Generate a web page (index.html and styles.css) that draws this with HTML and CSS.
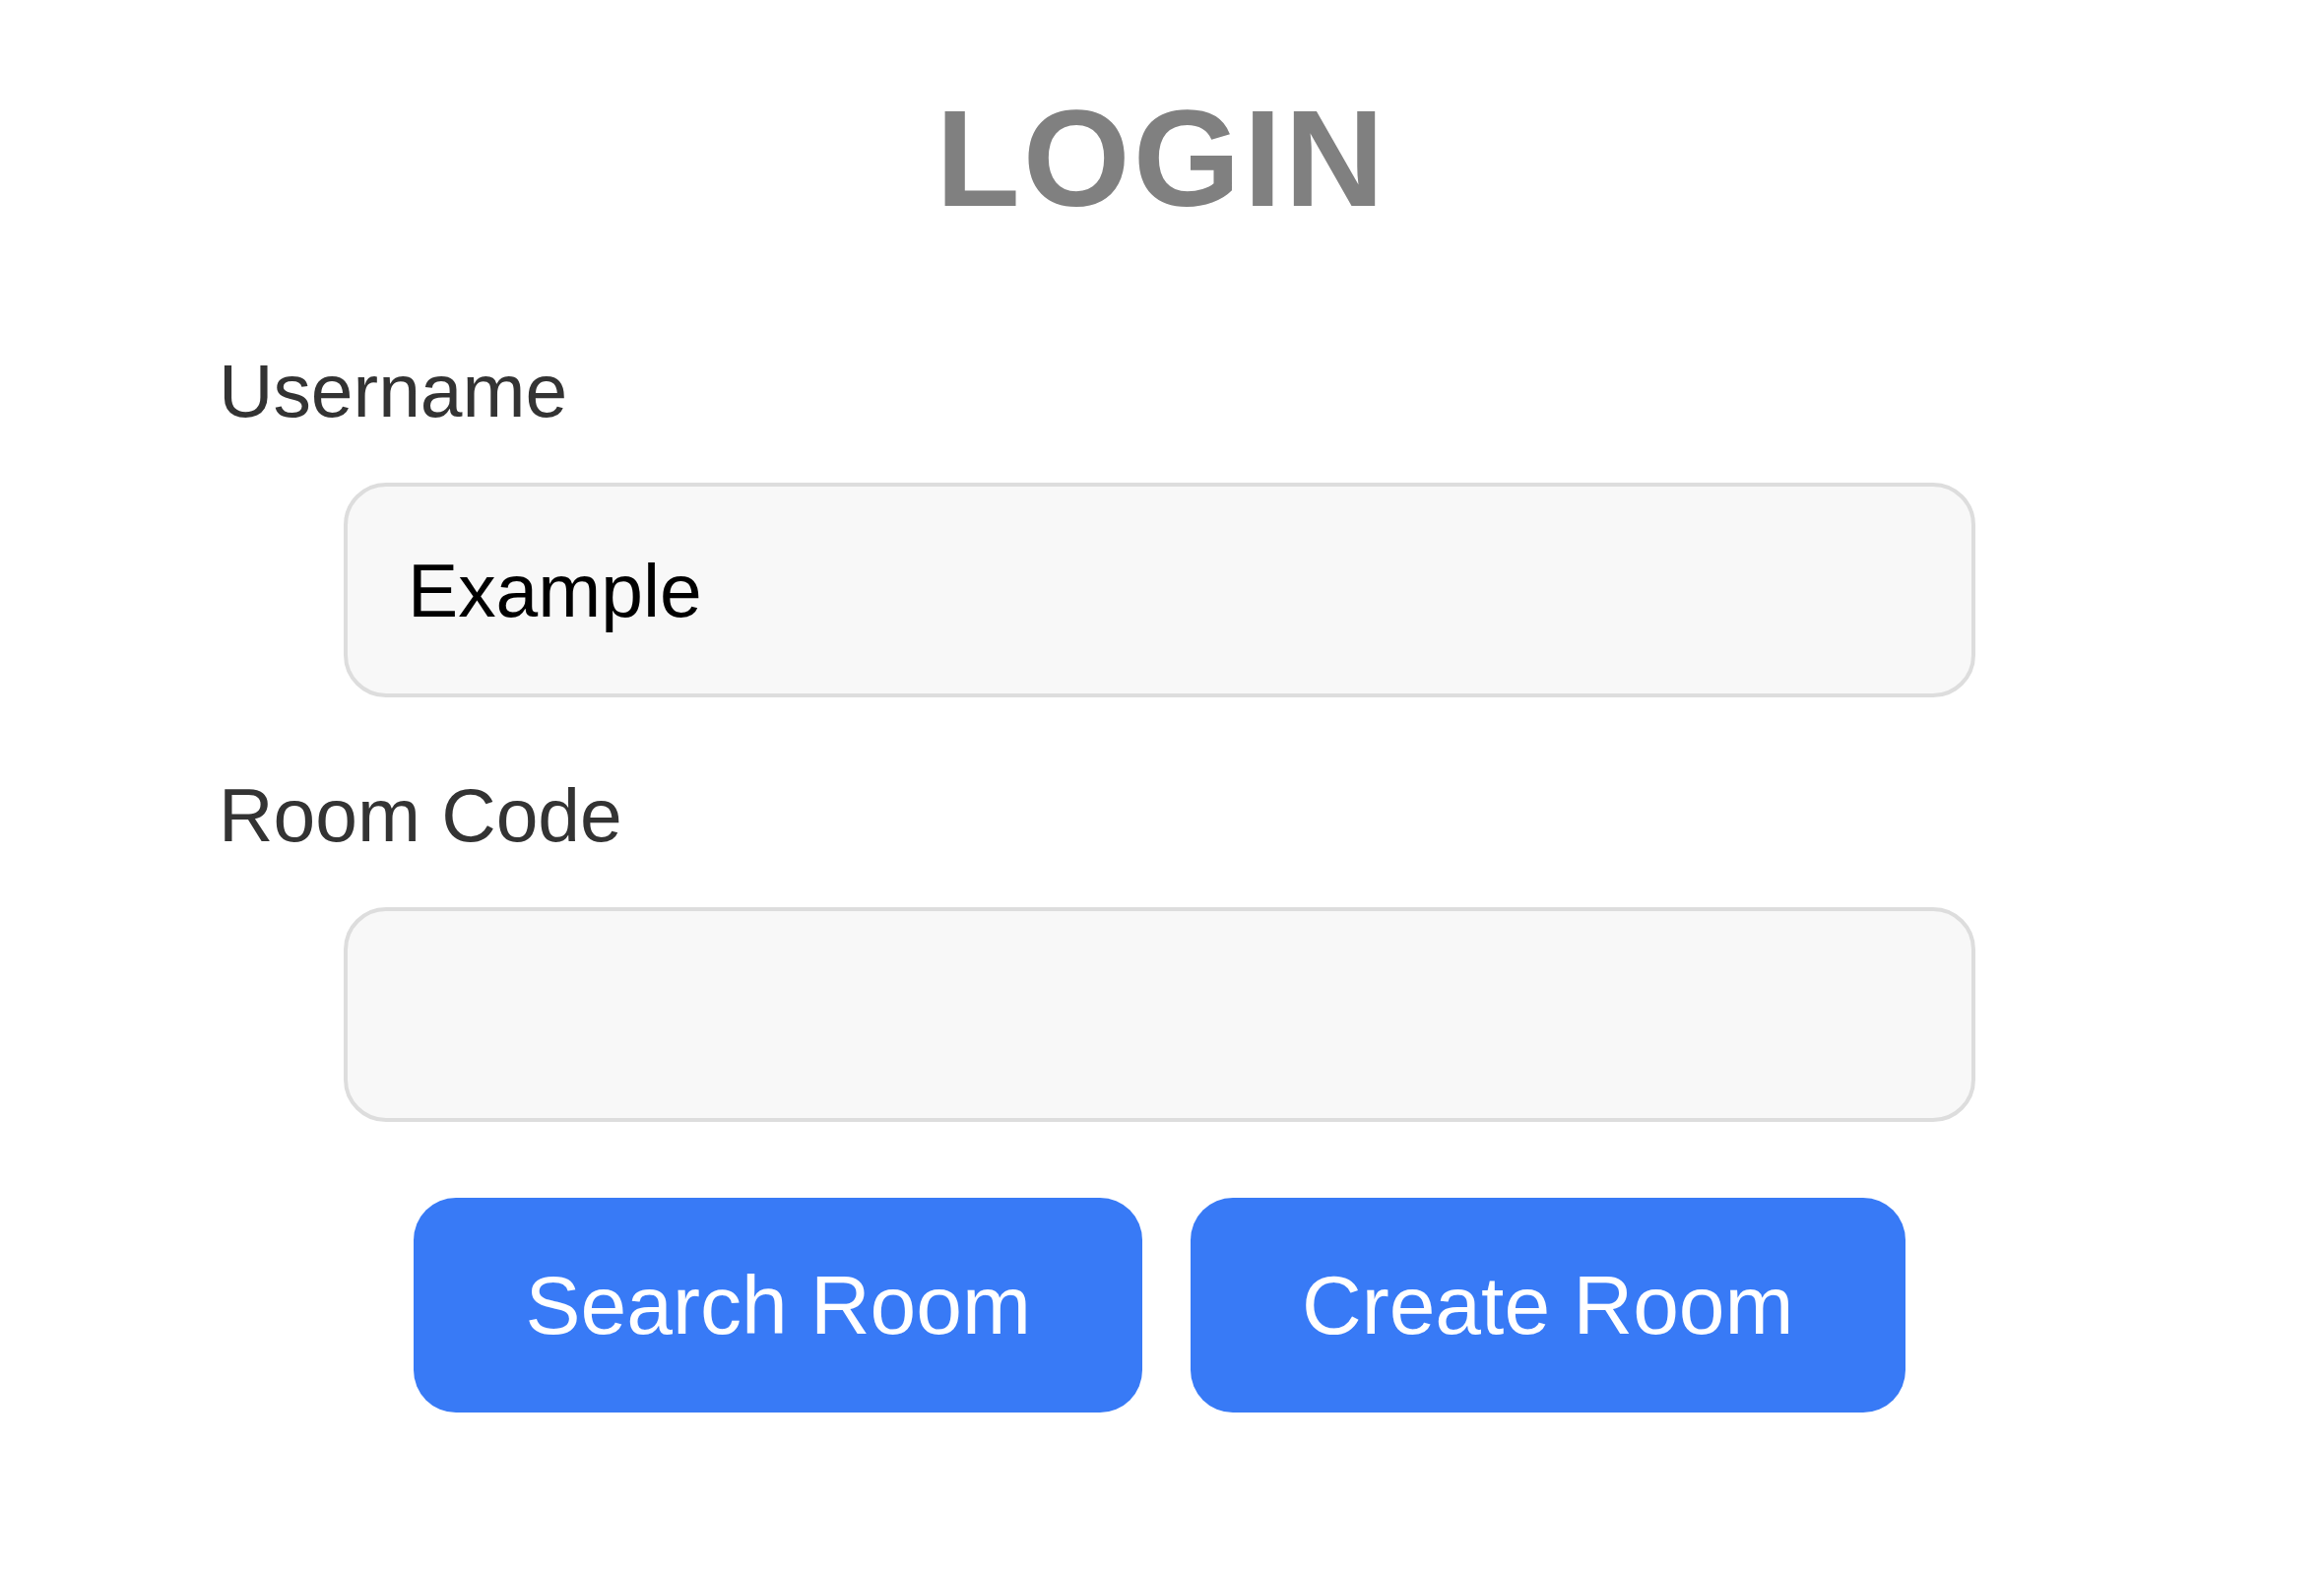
FILE: index.html
```html
<!DOCTYPE html>
<html lang="en">
<head>
<meta charset="utf-8">
<title>Login</title>
<link rel="stylesheet" href="styles.css">
</head>
<body>
<main class="page">
  <h1 class="title">LOGIN</h1>
  <form class="form">
    <label class="label" for="username">Username</label>
    <input class="field" id="username" type="text" value="Example">
    <label class="label label-second" for="room">Room Code</label>
    <input class="field" id="room" type="text" value="">
    <div class="actions">
      <button type="button" class="btn">Search Room</button>
      <button type="button" class="btn">Create Room</button>
    </div>
  </form>
</main>
</body>
</html>
```

FILE: styles.css
```css
html, body {
  margin: 0;
  padding: 0;
  background: #ffffff;
}

body {
  font-family: "Liberation Sans", Arial, sans-serif;
}

.page {
  width: 1911px;
  margin-left: 222px;
  display: flex;
  flex-direction: column;
}

.title {
  margin: 80px 0 0 0;
  padding-left: 4px;
  font-size: 140px;
  font-weight: 700;
  letter-spacing: 3px;
  line-height: normal;
  color: #808080;
  text-align: center;
}

.form {
  display: flex;
  flex-direction: column;
  margin-top: 110px;
}

.label {
  font-size: 76.8px;
  line-height: normal;
  color: #333333;
}

.label-second {
  margin-top: 75px;
}

.field {
  box-sizing: border-box;
  margin: 49px 127px 0 127px;
  height: 218px;
  padding: 0 61px;
  border: 4px solid #dddddd;
  border-radius: 43px;
  background: #f8f8f8;
  font-family: "Liberation Sans", Arial, sans-serif;
  font-size: 76.8px;
  color: #000000;
  outline: none;
}

.actions {
  display: flex;
  justify-content: center;
  gap: 49px;
  margin-top: 77px;
}

.btn {
  box-sizing: border-box;
  height: 218px;
  padding: 0 113px;
  border: none;
  border-radius: 43px;
  background: #387af6;
  color: #ffffff;
  font-family: "Liberation Sans", Arial, sans-serif;
  font-size: 84px;
  line-height: normal;
}
```
